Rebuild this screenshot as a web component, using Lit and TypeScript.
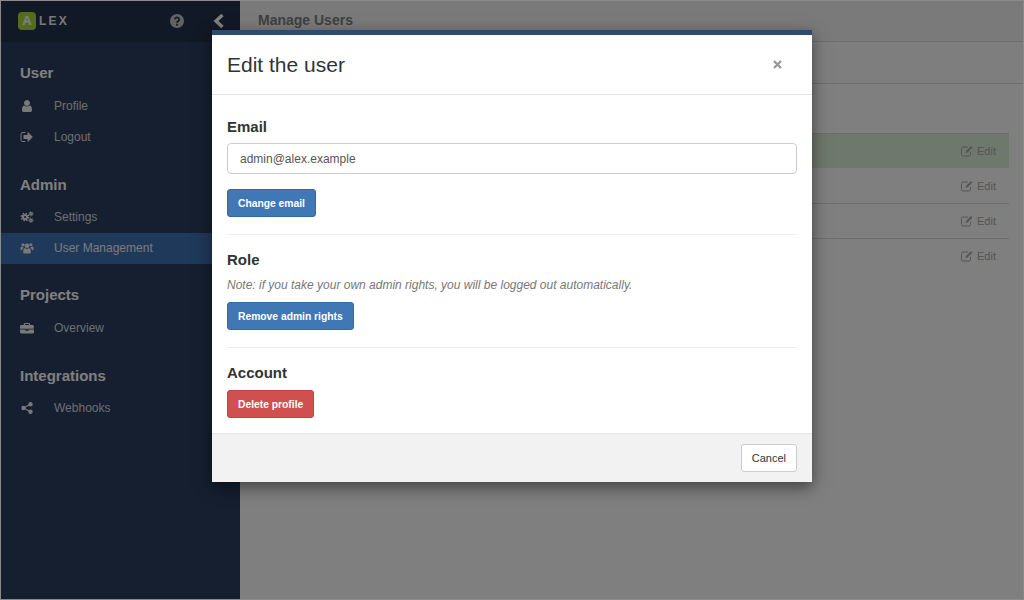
import { LitElement, css, html, svg } from "lit";
import { customElement } from "lit/decorators.js";

const ICONS: Record<string, any> = {
  user: svg`<path d="M1536 1399q0 109-62.500 187t-150.500 78h-854q-88 0-150.500-78t-62.500-187q0-85 8.500-160.500t31.500-152 58.500-131 94-89 134.500-34.500q131 128 313 128t313-128q76 0 134.500 34.500t94 89 58.500 131 31.500 152 8.500 160.500zm-256-887q0 159-112.500 271.500t-271.500 112.500-271.500-112.500-112.500-271.500 112.500-271.500 271.500-112.500 271.500 112.500 112.500 271.500z"/>`,
  logout: svg`<path d="M704 1440q0 4 1 20t.5 26.500-3 23.500-10 19.500-20.500 6.500h-320q-119 0-203.500-84.500t-84.500-203.500v-704q0-119 84.500-203.500t203.500-84.500h320q13 0 22.500 9.500t9.500 22.500q0 4 1 20t.5 26.500-3 23.500-10 19.500-20.500 6.500h-320q-66 0-113 47t-47 113v704q0 66 47 113t113 47h312l11.500 1 11.500 3 8 5.500 7 9 2 13.500zm928-544q0 26-19 45l-544 544q-19 19-45 19t-45-19-19-45v-288h-448q-26 0-45-19t-19-45v-384q0-26 19-45t45-19h448v-288q0-26 19-45t45-19 45 19l544 544q19 19 19 45z"/>`,
  cogs: svg`<g fill="none" stroke="currentColor"><circle cx="640" cy="900" r="270" stroke-width="260"/><circle cx="640" cy="900" r="480" stroke-width="170" stroke-dasharray="190 187"/><circle cx="1400" cy="480" r="150" stroke-width="170"/><circle cx="1400" cy="480" r="280" stroke-width="110" stroke-dasharray="110 110"/><circle cx="1400" cy="1310" r="150" stroke-width="170"/><circle cx="1400" cy="1310" r="280" stroke-width="110" stroke-dasharray="110 110"/></g>`,
  users: svg`<circle cx="896" cy="620" r="290"/><circle cx="400" cy="480" r="200"/><circle cx="1392" cy="480" r="200"/><path d="M420 1500v-260q0-290 220-340 120 110 256 110t256-110q220 50 220 340v260q0 90-90 90H510q-90 0-90-90z"/><path d="M60 1090V910q0-170 130-200 90 60 210 60 10 60 60 120-170 60-200 290H130q-70 0-70-90zM1732 1090V910q0-170-130-200-90 60-210 60-10 60-60 120 170 60 200 290h130q70 0 70-90z"/>`,
  briefcase: svg`<path d="M640 256h512q53 0 90 37t38 91v124h320q66 0 113 47t47 113v336H0V668q0-66 47-113t113-47h320V384q0-54 38-91t122-37zm0 128v124h512V384H640zM0 1100h704v128q0 26 19 45t45 19h256q26 0 45-19t19-45v-128h704v336q0 66-47 113t-113 47H160q-66 0-113-47T0 1436v-336zM832 1100h128v128H832v-128z"/>`,
  share: svg`<circle cx="1340" cy="420" r="280"/><circle cx="1340" cy="1370" r="280"/><circle cx="450" cy="896" r="280"/><path d="M450 896L1340 420M450 896L1340 1370" stroke="currentColor" stroke-width="150" fill="none"/>`,
};

@customElement("app-root")
export class AppRoot extends LitElement {
  static styles = css`
    :host {
      display: block;
      position: relative;
      width: 1024px;
      height: 600px;
      overflow: hidden;
      font-family: "Liberation Sans", Arial, sans-serif;
      font-size: 12px;
      color: #333;
      background: #fff;
    }
    .page {
      display: flex;
      height: 600px;
    }
    .sidebar {
      width: 240px;
      flex: none;
      background: #2b3f5e;
      color: #dfe3e8;
    }
    .brand {
      height: 42px;
      background: #22324d;
      display: flex;
      align-items: center;
      padding-left: 18px;
      box-sizing: border-box;
    }
    .logo-mark {
      width: 18px;
      height: 18px;
      border-radius: 4px;
      background: #aad83c;
      color: #fff;
      font-weight: 700;
      font-size: 13px;
      line-height: 18px;
      text-align: center;
    }
    .logo-text {
      margin-left: 3px;
      width: 34px;
      font-weight: 700;
      font-size: 12px;
      letter-spacing: 2.200px;
      color: #f0f0f0;
    }
    .help {
      margin-left: 97px;
      width: 14px;
      height: 14px;
      color: #c4c4c4;
    }
    .collapse {
      margin-left: 29px;
      width: 12px;
      height: 16px;
      color: #fff;
    }
    .nav {
      padding-top: 19px;
      display: flex;
      flex-direction: column;
      gap: 20.500px;
    }
    .nav section:nth-child(3) {
      margin-top: -1px;
    }
    .nav h3 {
      margin: 0 0 5px;
      padding-left: 20px;
      font-size: 15px;
      line-height: 24px;
      font-weight: 700;
      color: #fff;
    }
    .item {
      display: flex;
      align-items: center;
      height: 31px;
      padding-left: 20px;
      color: #d8dce2;
    }
    .item.active {
      background: #3e72b4;
      color: #f4f4f4;
    }
    .item svg {
      width: 14px;
      height: 14px;
      fill: #f2f2f2;
      color: #f2f2f2;
      flex: none;
      margin-right: 20px;
    }
    .content {
      flex: 1;
    }
    .title-bar {
      height: 41px;
      border-bottom: 1px solid #ddd;
      padding-left: 18px;
      font-size: 14px;
      font-weight: 700;
      line-height: 40px;
      color: #808080;
      background: #f4f4f4;
    }
    .tab-bar {
      height: 41px;
      border-bottom: 1px solid #ddd;
      background: #fcfcfc;
    }
    .users {
      margin: 49px 15px 0;
    }
    .row {
      height: 35px;
      box-sizing: border-box;
      border-top: 1px solid #d8d8d8;
      display: flex;
      align-items: center;
      justify-content: flex-end;
      padding-right: 13px;
      font-size: 11px;
      color: #aaa;
    }
    .row.current {
      background: #dff0d8;
    }
    .row.current + .row {
      border-top: 0;
    }
    .row svg {
      width: 12px;
      height: 12px;
      margin-right: 4px;
    }
    .backdrop {
      position: absolute;
      inset: 0;
      background: rgba(0, 0, 0, 0.5);
      border: 1px solid #8a8a8a;
      box-sizing: border-box;
    }
    .modal {
      position: absolute;
      top: 30px;
      left: 212px;
      width: 600px;
      box-sizing: border-box;
      background: #fff;
      border-top: 5px solid #2c4a73;
      box-shadow: 0 5px 15px rgba(0, 0, 0, 0.5);
    }
    .modal-header {
      display: flex;
      align-items: center;
      justify-content: space-between;
      height: 60px;
      box-sizing: border-box;
      padding: 0 30px 0 15px;
      border-bottom: 1px solid #e5e5e5;
    }
    .modal-header h2 {
      margin: 0;
      font-size: 21px;
      font-weight: 400;
      color: #333;
    }
    .close {
      width: 9px;
      height: 9px;
      color: #999;
    }
    .modal-body {
      padding: 22px 15px 15px;
    }
    .modal-body h4 {
      margin: 0;
      font-size: 15px;
      line-height: 20px;
      font-weight: 700;
      color: #333;
    }
    .email {
      display: block;
      width: 100%;
      box-sizing: border-box;
      height: 31px;
      margin: 6px 0 15px;
      padding: 0 12px;
      border: 1px solid #ccc;
      border-radius: 4px;
      font: 12px "Liberation Sans", Arial, sans-serif;
      color: #555;
      line-height: 29px;
    }
    hr {
      border: 0;
      border-top: 1px solid #eee;
      margin: 17px 0 15px;
    }
    .note {
      margin: 8px 0 10px;
      font-style: italic;
      line-height: 14px;
      color: #777;
    }
    .account {
      margin-bottom: 7px !important;
    }
    .btn {
      display: block;
      height: 28px;
      box-sizing: border-box;
      padding: 0 10px;
      border: 1px solid #2e6da4;
      border-radius: 3px;
      background: #3f78b5;
      color: #fff;
      font: 700 10.300px "Liberation Sans", Arial, sans-serif;
    }
    .btn.danger {
      background: #d0504f;
      border-color: #c9423f;
    }
    .btn.plain {
      background: #fff;
      border-color: #ccc;
      color: #333;
      font-weight: 400;
      font-size: 11px;
    }
    .modal-footer {
      display: flex;
      justify-content: flex-end;
      padding: 10px 15px;
      background: #f2f2f2;
      border-top: 1px solid #e5e5e5;
    }
  `;

  private navItem(icon: string, label: string, active = false) {
    return html`<div class="item ${active ? "active" : ""}">
      <svg viewBox="0 0 1792 1792">${ICONS[icon]}</svg>${label}
    </div>`;
  }

  private userRow(current = false) {
    return html`<div class="row ${current ? "current" : ""}">
      <svg viewBox="0 0 12 12" fill="none" stroke="currentColor">
        <path d="M9.500 7v2.500a1.500 1.500 0 0 1-1.500 1.500H2a1.500 1.500 0 0 1-1.500-1.500V3.500A1.500 1.500 0 0 1 2 2h5" stroke-width="1"/>
        <path d="M4.500 8l.5-2L10 1l1.500 1.500L6.500 7.500z" fill="currentColor" stroke="none"/>
      </svg>Edit
    </div>`;
  }

  render() {
    return html`
      <div class="page">
        <aside class="sidebar">
          <div class="brand">
            <span class="logo-mark">A</span>
            <span class="logo-text">LEX</span>
            <svg class="help" viewBox="0 0 14 14">
              <circle cx="7" cy="7" r="7" fill="currentColor"/>
              <path d="M4.800 5.400a2.200 2 0 1 1 3.300 1.800c-.8.5-1.100.8-1.100 1.600" fill="none" stroke="#22324d" stroke-width="1.700"/>
              <rect x="6.100" y="9.800" width="1.800" height="1.800" fill="#22324d"/>
            </svg>
            <svg class="collapse" viewBox="0 0 12 16">
              <path d="M9.500 2L3 8l6.500 6" fill="none" stroke="currentColor" stroke-width="3.400"/>
            </svg>
          </div>
          <nav class="nav">
            <section>
              <h3>User</h3>
              ${this.navItem("user", "Profile")}
              ${this.navItem("logout", "Logout")}
            </section>
            <section>
              <h3>Admin</h3>
              ${this.navItem("cogs", "Settings")}
              ${this.navItem("users", "User Management", true)}
            </section>
            <section>
              <h3>Projects</h3>
              ${this.navItem("briefcase", "Overview")}
            </section>
            <section>
              <h3>Integrations</h3>
              ${this.navItem("share", "Webhooks")}
            </section>
          </nav>
        </aside>
        <main class="content">
          <div class="title-bar">Manage Users</div>
          <div class="tab-bar"></div>
          <div class="users">
            ${this.userRow(true)} ${this.userRow()} ${this.userRow()} ${this.userRow()}
          </div>
        </main>
      </div>
      <div class="backdrop"></div>
      <div class="modal">
        <div class="modal-header">
          <h2>Edit the user</h2>
          <svg class="close" viewBox="0 0 9 9">
            <path d="M1 1l7 7M8 1L1 8" stroke="currentColor" stroke-width="2.400"/>
          </svg>
        </div>
        <div class="modal-body">
          <h4>Email</h4>
          <input class="email" .value=${"admin@alex.example"} />
          <button class="btn">Change email</button>
          <hr />
          <h4>Role</h4>
          <p class="note">Note: if you take your own admin rights, you will be logged out automatically.</p>
          <button class="btn">Remove admin rights</button>
          <hr />
          <h4 class="account">Account</h4>
          <button class="btn danger">Delete profile</button>
        </div>
        <div class="modal-footer">
          <button class="btn plain">Cancel</button>
        </div>
      </div>
    `;
  }
}
